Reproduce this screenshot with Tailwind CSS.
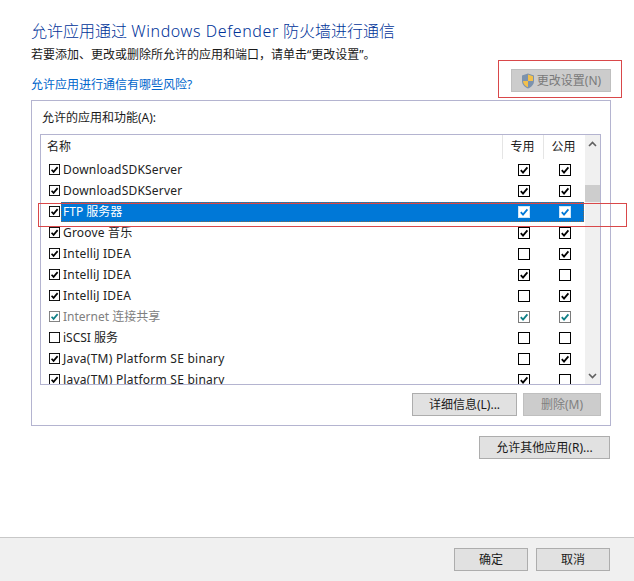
<!DOCTYPE html>
<html lang="zh-CN">
<head>
    <meta charset="UTF-8">
    <title>允许的应用</title>
    <script src="https://cdn.jsdelivr.net/npm/@tailwindcss/browser@4"></script>
</head>
<body class="bg-white">
    <svg class="hidden">
        <symbol id="on" viewBox="0 0 12 12"><rect x=".5" y=".5" width="11" height="11" fill="#fff" stroke="#000"/><path d="M2.800 6.200 5 8.600 9.400 3.400" fill="none" stroke="#000" stroke-width="1.800"/></symbol>
        <symbol id="off" viewBox="0 0 12 12"><rect x=".5" y=".5" width="11" height="11" fill="#fff" stroke="#000"/></symbol>
        <symbol id="grey" viewBox="0 0 12 12"><rect x=".5" y=".5" width="11" height="11" fill="#fff" stroke="#7a7a7a"/><path d="M2.800 6.200 5 8.600 9.400 3.400" fill="none" stroke="#0f7f86" stroke-width="1.800"/></symbol>
        <symbol id="sel" viewBox="0 0 12 12"><rect x=".5" y=".5" width="11" height="11" fill="#fff" stroke="#cfe6f8"/><path d="M2.800 6.200 5 8.600 9.400 3.400" fill="none" stroke="#0078d7" stroke-width="1.800"/></symbol>
    </svg>

    <div class="relative w-[634px] h-[581px] overflow-hidden flex flex-col text-[12px] text-[#1a1a1a] font-['Noto_Sans','Noto_Sans_CJK_SC',sans-serif]">
        <main class="h-[537px] pl-[31px] pr-[23px] pt-[20px]">
            <h1 class="h-[22px] leading-[22px] text-[16px] font-light text-[#003399]">允许应用通过 <span class="tracking-[0.6px]">Windows Defender</span> 防火墙进行通信</h1>
            <p class="mt-[3px] h-[20px] leading-[20px]">若要添加、更改或删除所允许的应用和端口，请单击“更改设置”。</p>

            <div class="flex justify-between items-end h-[27px]">
                <a class="text-[#0066cc] leading-[20px] h-[18px] -mb-[1px] pb-[2px]">允许应用进行通信有哪些风险?</a>
                <button class="w-[100px] h-[23px] flex items-center justify-center bg-[#cccccc] border border-[#bfbfbf] text-[#7a7a7a]">
                    <svg class="w-[14px] h-[16px] shrink-0 mr-[2px]" viewBox="0 0 14 16"><path d="M7 .5 13 2.500V8c0 3.500-2.600 6-6 7.500C3.600 14 1 11.500 1 8V2.500Z" fill="#7d93ad"/><path d="M7 1.500 12 3.200V8H7ZM7 8V14.300C4.200 13 2 10.800 2 8Z" fill="#f2c04c"/></svg>
                    <span>更改设置(N)</span>
                </button>
            </div>

            <section class="mt-[8px] h-[326px] border border-[#b4b4d0] pl-[8px] pr-[9px]">
                <div class="h-[33px] pt-[7px] leading-[20px] pl-[2px]">允许的应用和功能(A):</div>
                <div class="h-[251px] border border-[#b4b4d0] flex overflow-hidden">
                    <div class="w-[544px] flex flex-col">
                        <div class="h-[24px] shrink-0 flex leading-[24px]">
                            <div class="w-[461px] pl-[6px]">名称</div>
                            <div class="w-[41px] text-center pr-[1px] border-l border-[#e5e5e5]">专用</div>
                            <div class="w-[42px] text-center pr-[2px] border-l border-[#e5e5e5]">公用</div>
                        </div>
                        <ul class="text-[#222222]">
                            <li class="h-[21px] flex items-center pl-[8px]"><svg class="w-[11px] h-[11px] shrink-0"><use href="#on"/></svg><span class="w-[448px] pl-[3px] tracking-[0.2px]">DownloadSDKServer</span><svg class="w-[12px] h-[12px] shrink-0 ml-[10px]"><use href="#on"/></svg><svg class="w-[12px] h-[12px] shrink-0 ml-[29px]"><use href="#on"/></svg></li>
                            <li class="h-[21px] flex items-center pl-[8px]"><svg class="w-[11px] h-[11px] shrink-0"><use href="#on"/></svg><span class="w-[448px] pl-[3px] tracking-[0.2px]">DownloadSDKServer</span><svg class="w-[12px] h-[12px] shrink-0 ml-[10px]"><use href="#on"/></svg><svg class="w-[12px] h-[12px] shrink-0 ml-[29px]"><use href="#on"/></svg></li>
                            <li class="h-[21px] flex items-center pl-[8px]"><svg class="w-[11px] h-[11px] shrink-0"><use href="#on"/></svg><div class="ml-[1px] w-[523px] h-[20px] flex items-center bg-[#0078d7] border border-dotted border-[#7f6a4f] text-white"><span class="w-[456px] pl-[1px]">FTP 服务器</span><svg class="w-[12px] h-[12px] shrink-0"><use href="#sel"/></svg><svg class="w-[12px] h-[12px] shrink-0 ml-[29px]"><use href="#sel"/></svg></div></li>
                            <li class="h-[21px] flex items-center pl-[8px]"><svg class="w-[11px] h-[11px] shrink-0"><use href="#on"/></svg><span class="w-[448px] pl-[3px] tracking-[0.2px]">Groove 音乐</span><svg class="w-[12px] h-[12px] shrink-0 ml-[10px]"><use href="#on"/></svg><svg class="w-[12px] h-[12px] shrink-0 ml-[29px]"><use href="#on"/></svg></li>
                            <li class="h-[21px] flex items-center pl-[8px]"><svg class="w-[11px] h-[11px] shrink-0"><use href="#on"/></svg><span class="w-[448px] pl-[3px] tracking-[0.2px]">IntelliJ IDEA</span><svg class="w-[12px] h-[12px] shrink-0 ml-[10px]"><use href="#off"/></svg><svg class="w-[12px] h-[12px] shrink-0 ml-[29px]"><use href="#on"/></svg></li>
                            <li class="h-[21px] flex items-center pl-[8px]"><svg class="w-[11px] h-[11px] shrink-0"><use href="#on"/></svg><span class="w-[448px] pl-[3px] tracking-[0.2px]">IntelliJ IDEA</span><svg class="w-[12px] h-[12px] shrink-0 ml-[10px]"><use href="#on"/></svg><svg class="w-[12px] h-[12px] shrink-0 ml-[29px]"><use href="#off"/></svg></li>
                            <li class="h-[21px] flex items-center pl-[8px]"><svg class="w-[11px] h-[11px] shrink-0"><use href="#on"/></svg><span class="w-[448px] pl-[3px] tracking-[0.2px]">IntelliJ IDEA</span><svg class="w-[12px] h-[12px] shrink-0 ml-[10px]"><use href="#off"/></svg><svg class="w-[12px] h-[12px] shrink-0 ml-[29px]"><use href="#on"/></svg></li>
                            <li class="h-[21px] flex items-center pl-[8px]"><svg class="w-[11px] h-[11px] shrink-0"><use href="#grey"/></svg><span class="w-[448px] pl-[3px] text-[#808080]">Internet 连接共享</span><svg class="w-[12px] h-[12px] shrink-0 ml-[10px]"><use href="#grey"/></svg><svg class="w-[12px] h-[12px] shrink-0 ml-[29px]"><use href="#grey"/></svg></li>
                            <li class="h-[21px] flex items-center pl-[8px]"><svg class="w-[11px] h-[11px] shrink-0"><use href="#off"/></svg><span class="w-[448px] pl-[3px]">iSCSI 服务</span><svg class="w-[12px] h-[12px] shrink-0 ml-[10px]"><use href="#off"/></svg><svg class="w-[12px] h-[12px] shrink-0 ml-[29px]"><use href="#off"/></svg></li>
                            <li class="h-[21px] flex items-center pl-[8px]"><svg class="w-[11px] h-[11px] shrink-0"><use href="#on"/></svg><span class="w-[448px] pl-[3px] tracking-[0.25px]">Java(TM) Platform SE binary</span><svg class="w-[12px] h-[12px] shrink-0 ml-[10px]"><use href="#off"/></svg><svg class="w-[12px] h-[12px] shrink-0 ml-[29px]"><use href="#on"/></svg></li>
                            <li class="h-[21px] flex items-center pl-[8px]"><svg class="w-[11px] h-[11px] shrink-0"><use href="#on"/></svg><span class="w-[448px] pl-[3px] tracking-[0.25px]">Java(TM) Platform SE binary</span><svg class="w-[12px] h-[12px] shrink-0 ml-[10px]"><use href="#on"/></svg><svg class="w-[12px] h-[12px] shrink-0 ml-[29px]"><use href="#off"/></svg></li>
                        </ul>
                    </div>
                    <div class="w-[15px] bg-[#f0f0f0] flex flex-col">
                        <div class="h-[17px] flex items-center justify-center">
                            <svg class="w-[9px] h-[6px]" viewBox="0 0 9 6"><path d="M1 5 4.500 1.500 8 5" fill="none" stroke="#606060" stroke-width="1.600"/></svg>
                        </div>
                        <div class="mt-[33px] h-[17px] bg-[#cdcdcd]"></div>
                        <div class="mt-auto h-[17px] flex items-center justify-center">
                            <svg class="w-[9px] h-[6px]" viewBox="0 0 9 6"><path d="M1 1 4.500 4.500 8 1" fill="none" stroke="#606060" stroke-width="1.600"/></svg>
                        </div>
                    </div>
                </div>
                <div class="mt-[8px] flex justify-end gap-[6px]">
                    <button class="w-[105px] h-[23px] bg-[#e1e1e1] border border-[#adadad]">详细信息(L)...</button>
                    <button class="w-[78px] h-[23px] bg-[#cccccc] border border-[#bfbfbf] text-[#808080]">删除(M)</button>
                </div>
            </section>

            <div class="mt-[10px] flex justify-end pr-[1px]">
                <button class="w-[131px] h-[23px] bg-[#e1e1e1] border border-[#adadad]">允许其他应用(R)...</button>
            </div>
        </main>

        <footer class="h-[44px] border-t border-[#c8c8c8] bg-[#f0f0f0] flex justify-end gap-[8px] pt-[10px] pr-[24px]">
            <button class="w-[74px] h-[23px] bg-[#e1e1e1] border border-[#adadad]">确定</button>
            <button class="w-[74px] h-[23px] bg-[#e1e1e1] border border-[#adadad]">取消</button>
        </footer>

        <!-- annotation boxes drawn over the dialog -->
        <div class="absolute left-[498px] top-[60px] w-[124px] h-[38px] border border-[#d9484a]"></div>
        <div class="absolute left-[38px] top-[203px] w-[589px] h-[24px] border border-[#d9484a]"></div>
    </div>
</body>
</html>
